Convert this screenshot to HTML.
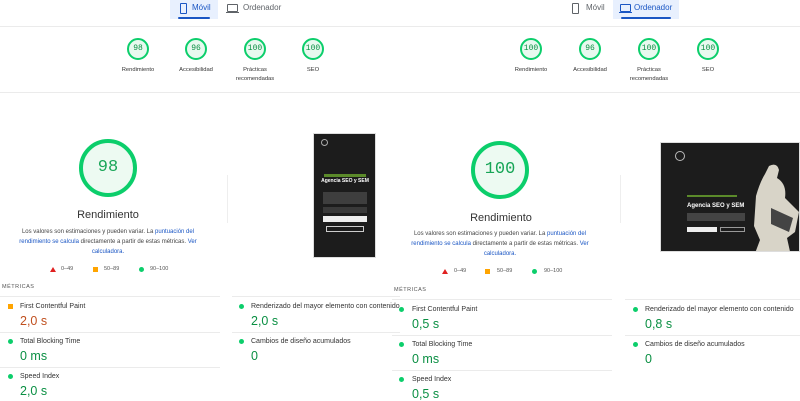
<!DOCTYPE html>
<html><head><meta charset="utf-8"><style>
*{margin:0;padding:0;box-sizing:border-box}
body{width:800px;height:400px;overflow:hidden;background:#fff;font-family:"Liberation Sans","DejaVu Sans",sans-serif;position:relative;color:#202124}
.a{position:absolute}
.tab{position:absolute;top:0;height:19px;font-size:8px;line-height:15px;color:#5f6368}
.tab.on{background:#e8f0fe;color:#1a56c4}
.tab.on:after{content:"";position:absolute;left:8px;right:8px;bottom:0;height:2px;background:#1a56c4;border-radius:1px}
.hl{position:absolute;height:1px;background:#ebebeb}
.sc{position:absolute;width:22px;height:22px;border-radius:50%;border:2px solid #0cce6b;background:#e8f9ef;color:#0a8f43;font-family:"Liberation Mono",monospace;font-size:8px;line-height:18px;text-align:center}
.lb{position:absolute;width:60px;font-size:5.8px;line-height:9px;text-align:center;color:#333}
.big{position:absolute;width:58px;height:58px;border-radius:50%;border:4px solid #0cce6b;background:#edfaf2;color:#18a557;font-family:"Liberation Mono",monospace;font-size:17px;line-height:50px;text-align:center}
.rt{position:absolute;font-size:11px;color:#333;width:160px;text-align:center}
.ds{position:absolute;width:180px;font-size:6px;line-height:10px;text-align:center;color:#444}
.ds b{font-weight:normal;color:#1a56c4}
.lg{position:absolute;font-size:5.5px;color:#555}
.mt{position:absolute;font-size:5.5px;letter-spacing:.5px;color:#555}
.ml{position:absolute;font-size:7px;color:#333;white-space:nowrap}
.mv{position:absolute;font-size:12.5px;color:#0a8f43;white-space:nowrap}
.dot{position:absolute;width:5px;height:5px;border-radius:50%;background:#0cce6b}
.sq{position:absolute;width:5px;height:5px;background:#ffa400}
</style></head><body>

<div class="tab on" style="left:170px;width:48px;padding-left:22px">Móvil</div>
<div class="a" style="left:180px;top:3px;width:7px;height:11px;border:1.5px solid #1a56c4;border-radius:1px"></div>
<div class="tab" style="left:224px;width:60px;padding-left:19px">Ordenador</div>
<div class="a" style="left:227px;top:4px;width:11px;height:8px;border:1.3px solid #5f6368;border-radius:1px"></div>
<div class="a" style="left:226px;top:12px;width:13px;height:1.3px;background:#5f6368"></div>
<div class="hl" style="left:0;width:400px;top:26px"></div>

<div class="sc" style="left:127px;top:38px">98</div>
<div class="sc" style="left:185px;top:38px">96</div>
<div class="sc" style="left:244px;top:38px">100</div>
<div class="sc" style="left:302px;top:38px">100</div>
<div class="lb" style="left:108px;top:66px">Rendimiento</div>
<div class="lb" style="left:166px;top:66px">Accesibilidad</div>
<div class="lb" style="left:225px;top:66px">Prácticas<br>recomendadas</div>
<div class="lb" style="left:283px;top:66px">SEO</div>
<div class="hl" style="left:0;width:400px;top:92px"></div>

<div class="big" style="left:79px;top:139px">98</div>
<div class="rt" style="left:28px;top:209px">Rendimiento</div>
<div class="ds" style="left:18px;top:227px">Los valores son estimaciones y pueden variar. La <b>puntuación del rendimiento se calcula</b> directamente a partir de estas métricas. <b>Ver calculadora.</b></div>
<div class="a" style="left:50px;top:267px;width:0;height:0;border-left:3px solid transparent;border-right:3px solid transparent;border-bottom:5px solid #e02020"></div>
<div class="lg" style="left:61px;top:266px">0–49</div>
<div class="sq" style="left:93px;top:267px"></div>
<div class="lg" style="left:104px;top:266px">50–89</div>
<div class="dot" style="left:139px;top:267px"></div>
<div class="lg" style="left:150px;top:266px">90–100</div>
<div class="a" style="left:227px;top:175px;width:1px;height:48px;background:#eee"></div>

<div class="a" style="left:313px;top:133px;width:63px;height:125px;background:#1c1c1c;border:1px solid #ddd">
  <div class="a" style="left:7px;top:5px;width:7px;height:7px;border-radius:50%;border:1px solid #aaa"></div>
  <div class="a" style="left:10px;top:40px;width:42px;height:3px;background:#5b8a2a"></div>
  <div class="a" style="left:6px;top:45px;width:50px;font-size:5px;font-weight:bold;color:#fff;text-align:center;line-height:5px">Agencia SEO y SEM</div>
  <div class="a" style="left:9px;top:58px;width:44px;height:12px;background:#555;opacity:.6"></div>
  <div class="a" style="left:9px;top:73px;width:44px;height:6px;background:#555;opacity:.5"></div>
  <div class="a" style="left:9px;top:82px;width:44px;height:6px;background:#eee"></div>
  <div class="a" style="left:12px;top:92px;width:38px;height:6px;border:1px solid #ccc"></div>
</div>

<div class="mt" style="left:2px;top:284px">MÉTRICAS</div>
<div class="hl" style="left:0;width:220px;top:296px"></div>
<div class="hl" style="left:232px;width:168px;top:296px"></div>
<div class="sq" style="left:8px;top:304px"></div>
<div class="ml" style="left:20px;top:303px">First Contentful Paint</div>
<div class="mv" style="left:20px;top:314px;color:#c0501f">2,0 s</div>
<div class="hl" style="left:0;width:220px;top:332px"></div>
<div class="dot" style="left:8px;top:339px"></div>
<div class="ml" style="left:20px;top:338px">Total Blocking Time</div>
<div class="mv" style="left:20px;top:349px">0 ms</div>
<div class="hl" style="left:0;width:220px;top:367px"></div>
<div class="dot" style="left:8px;top:374px"></div>
<div class="ml" style="left:20px;top:373px">Speed Index</div>
<div class="mv" style="left:20px;top:384px">2,0 s</div>
<div class="dot" style="left:239px;top:304px"></div>
<div class="ml" style="left:251px;top:303px">Renderizado del mayor elemento con contenido</div>
<div class="mv" style="left:251px;top:314px">2,0 s</div>
<div class="hl" style="left:232px;width:168px;top:332px"></div>
<div class="dot" style="left:239px;top:339px"></div>
<div class="ml" style="left:251px;top:338px">Cambios de diseño acumulados</div>
<div class="mv" style="left:251px;top:349px">0</div>

<div class="tab" style="left:567px;width:46px;padding-left:19px">Móvil</div>
<div class="a" style="left:572px;top:3px;width:7px;height:11px;border:1.5px solid #5f6368;border-radius:1px"></div>
<div class="tab on" style="left:613px;width:66px;padding-left:21px">Ordenador</div>
<div class="a" style="left:620px;top:4px;width:11px;height:8px;border:1.3px solid #1a56c4;border-radius:1px"></div>
<div class="a" style="left:619px;top:12px;width:13px;height:1.3px;background:#1a56c4"></div>
<div class="hl" style="left:400px;width:400px;top:26px"></div>

<div class="sc" style="left:520px;top:38px">100</div>
<div class="sc" style="left:579px;top:38px">96</div>
<div class="sc" style="left:638px;top:38px">100</div>
<div class="sc" style="left:697px;top:38px">100</div>
<div class="lb" style="left:501px;top:66px">Rendimiento</div>
<div class="lb" style="left:560px;top:66px">Accesibilidad</div>
<div class="lb" style="left:619px;top:66px">Prácticas<br>recomendadas</div>
<div class="lb" style="left:678px;top:66px">SEO</div>
<div class="hl" style="left:400px;width:400px;top:92px"></div>

<div class="big" style="left:471px;top:141px">100</div>
<div class="rt" style="left:421px;top:212px">Rendimiento</div>
<div class="ds" style="left:410px;top:229px">Los valores son estimaciones y pueden variar. La <b>puntuación del rendimiento se calcula</b> directamente a partir de estas métricas. <b>Ver calculadora.</b></div>
<div class="a" style="left:442px;top:269px;width:0;height:0;border-left:3px solid transparent;border-right:3px solid transparent;border-bottom:5px solid #e02020"></div>
<div class="lg" style="left:454px;top:268px">0–49</div>
<div class="sq" style="left:485px;top:269px"></div>
<div class="lg" style="left:497px;top:268px">50–89</div>
<div class="dot" style="left:532px;top:269px"></div>
<div class="lg" style="left:544px;top:268px">90–100</div>
<div class="a" style="left:620px;top:175px;width:1px;height:48px;background:#eee"></div>

<div class="a" style="left:660px;top:142px;width:140px;height:110px;background:#1c1c1c;border:1px solid #ddd;overflow:hidden">
  <div class="a" style="left:14px;top:8px;width:10px;height:10px;border-radius:50%;border:1px solid #bbb"></div>
  <div class="a" style="left:26px;top:52px;width:50px;height:2px;background:#5b8a2a"></div>
  <div class="a" style="left:26px;top:60px;width:70px;font-size:6px;font-weight:bold;color:#fff;white-space:nowrap">Agencia SEO y SEM</div>
  <div class="a" style="left:26px;top:70px;width:58px;height:8px;background:#444"></div>
  <div class="a" style="left:26px;top:84px;width:30px;height:5px;background:#eee"></div>
  <div class="a" style="left:59px;top:84px;width:25px;height:5px;border:1px solid #999"></div>
  <svg class="a" style="left:88px;top:15px" width="52" height="95" viewBox="0 0 52 95"><path d="M20 8 q8-4 10 4 l-2 8 q10 6 8 20 l14 14 -4 20 -8 6 4 18 H5 l6-16 -6-14 2-30 q4-14 9-22z" fill="#d8d4c8"/><path d="M22 50 l22 10 -4 14 -18-8z" fill="#444"/></svg>
</div>

<div class="mt" style="left:394px;top:287px">MÉTRICAS</div>
<div class="hl" style="left:392px;width:220px;top:299px"></div>
<div class="hl" style="left:625px;width:175px;top:299px"></div>
<div class="dot" style="left:399px;top:307px"></div>
<div class="ml" style="left:412px;top:306px">First Contentful Paint</div>
<div class="mv" style="left:412px;top:317px">0,5 s</div>
<div class="hl" style="left:392px;width:220px;top:335px"></div>
<div class="dot" style="left:399px;top:342px"></div>
<div class="ml" style="left:412px;top:341px">Total Blocking Time</div>
<div class="mv" style="left:412px;top:352px">0 ms</div>
<div class="hl" style="left:392px;width:220px;top:370px"></div>
<div class="dot" style="left:399px;top:377px"></div>
<div class="ml" style="left:412px;top:376px">Speed Index</div>
<div class="mv" style="left:412px;top:387px">0,5 s</div>
<div class="dot" style="left:633px;top:307px"></div>
<div class="ml" style="left:645px;top:306px">Renderizado del mayor elemento con contenido</div>
<div class="mv" style="left:645px;top:317px">0,8 s</div>
<div class="hl" style="left:625px;width:175px;top:335px"></div>
<div class="dot" style="left:633px;top:342px"></div>
<div class="ml" style="left:645px;top:341px">Cambios de diseño acumulados</div>
<div class="mv" style="left:645px;top:352px">0</div>
</body></html>
